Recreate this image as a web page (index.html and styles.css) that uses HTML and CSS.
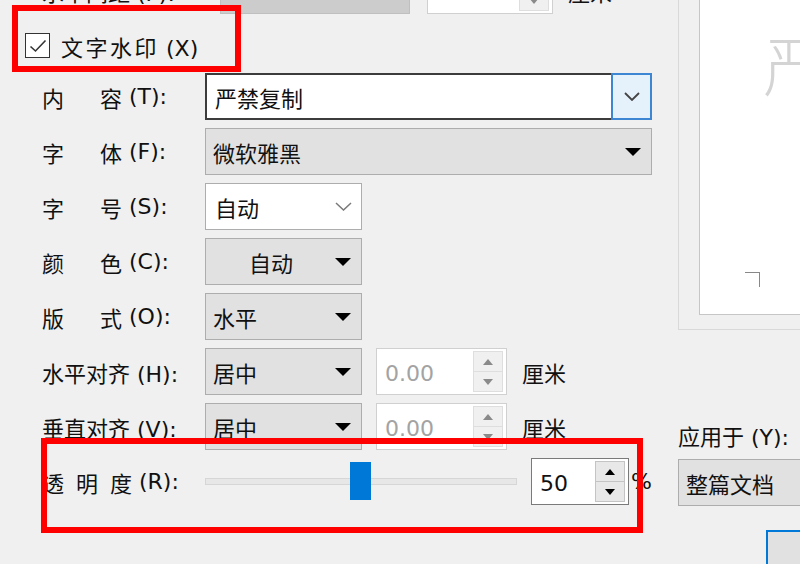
FILE: index.html
```html
<!DOCTYPE html>
<html lang="zh-CN">
<head>
    <meta charset="UTF-8">
    <title>水印</title>
    <link rel="stylesheet" href="styles.css">
</head>
<body>
    <div class="dialog">
        <div class="form">
            <div class="row row-cut">
                <span class="label">水平间距 (P):</span>
                <span class="field-off"></span>
                <div class="spin spin-cut">
                    <span class="spin-value">0.00</span>
                    <span class="spin-btns"><i class="up"></i><i class="down"></i></span>
                </div>
                <span class="unit">厘米</span>
            </div>

            <label class="check-row">
                <span class="checkbox">
                    <svg width="18" height="14" viewBox="0 0 18 14"><path d="M1.5 7.5 L6.5 12 L16.5 1.5" fill="none" stroke="#333" stroke-width="1.6"/></svg>
                </span>
                <span class="check-text"><span class="check-cjk">文字水印</span> (X)</span>
            </label>

            <div class="row">
                <span class="label"><span class="spread"><b>内</b><b>容</b></span> (T):</span>
                <div class="combo wide">
                    <span class="combo-text">严禁复制</span>
                    <span class="combo-btn">
                        <svg width="16" height="9" viewBox="0 0 16 9"><path d="M1 1 L8 8 L15 1" fill="none" stroke="#444" stroke-width="1.8"/></svg>
                    </span>
                </div>
            </div>

            <div class="row">
                <span class="label"><span class="spread"><b>字</b><b>体</b></span> (F):</span>
                <div class="select wide">
                    <span class="select-text">微软雅黑</span>
                    <svg class="tri" width="16" height="8" viewBox="0 0 16 8"><path d="M0 0 H16 L8 8 Z" fill="#000"/></svg>
                </div>
            </div>

            <div class="row">
                <span class="label"><span class="spread"><b>字</b><b>号</b></span> (S):</span>
                <div class="edit-select small">
                    <span class="select-text">自动</span>
                    <svg width="17" height="9" viewBox="0 0 17 9"><path d="M1 1 L8.5 8 L16 1" fill="none" stroke="#7a7a7a" stroke-width="1.5"/></svg>
                </div>
            </div>

            <div class="row">
                <span class="label"><span class="spread"><b>颜</b><b>色</b></span> (C):</span>
                <div class="select small">
                    <span class="select-text center">自动</span>
                    <svg class="tri" width="16" height="8" viewBox="0 0 16 8"><path d="M0 0 H16 L8 8 Z" fill="#000"/></svg>
                </div>
            </div>

            <div class="row">
                <span class="label"><span class="spread"><b>版</b><b>式</b></span> (O):</span>
                <div class="select small">
                    <span class="select-text">水平</span>
                    <svg class="tri" width="16" height="8" viewBox="0 0 16 8"><path d="M0 0 H16 L8 8 Z" fill="#000"/></svg>
                </div>
            </div>

            <div class="row">
                <span class="label">水平对齐 (H):</span>
                <div class="select small">
                    <span class="select-text">居中</span>
                    <svg class="tri" width="16" height="8" viewBox="0 0 16 8"><path d="M0 0 H16 L8 8 Z" fill="#000"/></svg>
                </div>
                <div class="spin">
                    <span class="spin-value">0.00</span>
                    <span class="spin-btns"><i class="up"></i><i class="down"></i></span>
                </div>
                <span class="unit">厘米</span>
            </div>

            <div class="row">
                <span class="label">垂直对齐 (V):</span>
                <div class="select small">
                    <span class="select-text">居中</span>
                    <svg class="tri" width="16" height="8" viewBox="0 0 16 8"><path d="M0 0 H16 L8 8 Z" fill="#000"/></svg>
                </div>
                <div class="spin">
                    <span class="spin-value">0.00</span>
                    <span class="spin-btns"><i class="up"></i><i class="down"></i></span>
                </div>
                <span class="unit">厘米</span>
            </div>

            <div class="row">
                <span class="label"><span class="spread spread3"><b>透</b><b>明</b><b>度</b></span> (R):</span>
                <div class="slider">
                    <div class="track"></div>
                    <div class="thumb"></div>
                </div>
                <div class="spin spin-pct">
                    <span class="spin-value">50</span>
                    <span class="spin-btns"><i class="up"></i><i class="down"></i></span>
                </div>
                <span class="pct">%</span>
            </div>
        </div>

        <div class="side">
            <div class="preview">
                <div class="page">
                    <span class="wm">严</span>
                    <span class="crop"></span>
                </div>
            </div>
            <div class="apply-label">应用于 (Y):</div>
            <div class="select apply">
                <span class="select-text">整篇文档</span>
            </div>
            <div class="ok-btn"></div>
        </div>
    </div>

    <div class="mark mark-check"></div>
    <div class="mark mark-alpha"></div>
</body>
</html>
```

FILE: styles.css
```css
body {
    margin: 0;
    width: 800px;
    height: 564px;
    overflow: hidden;
    background: #f0f0f0;
    font-family: "DejaVu Sans", "Noto Sans CJK SC", "Microsoft YaHei", sans-serif;
    font-size: 22px;
    color: #111;
    position: relative;
}

.dialog {
    display: grid;
    grid-template-columns: 678px 1fr;
    margin-top: -33px;
}

.form {
    padding-left: 42px;
}

.row {
    display: flex;
    align-items: center;
    height: 47px;
    margin-bottom: 8px;
}

.label {
    width: 163px;
    flex-shrink: 0;
    white-space: nowrap;
    display: flex;
    align-items: center;
}

.spread {
    display: inline-flex;
    justify-content: space-between;
    width: 80px;
    margin-right: 7px;
}

.spread b {
    font-weight: normal;
}

.spread3 {
    width: 90px;
}

/* first row, mostly scrolled off */
.row-cut .field-off {
    width: 190px;
    height: 47px;
    margin-left: 15px;
    background: #cccccc;
    border: 1px solid #bfbfbf;
    box-sizing: border-box;
}

.spin-cut {
    margin-left: 17px !important;
    width: 126px !important;
}

.check-row {
    display: flex;
    align-items: center;
    height: 47px;
    margin: 8px 0 4px -17px;
}

.checkbox {
    width: 25px;
    height: 25px;
    border: 1.5px solid #333;
    box-sizing: border-box;
    display: flex;
    align-items: center;
    justify-content: center;
    margin-right: 11px;
    background: #fff;
}

.check-text {
    white-space: nowrap;
}

.check-cjk {
    letter-spacing: 2.5px;
}

.wide {
    width: 447px;
}

.small {
    width: 157px;
}

.combo {
    display: flex;
    height: 47px;
    box-sizing: border-box;
    background: #fff;
    border: 2px solid #3c3c3c;
    border-right: none;
}

.combo-text {
    flex: 1;
    padding-left: 8px;
    display: flex;
    align-items: center;
}

.combo-btn {
    width: 37px;
    margin: -2px 0;
    background: #e5f1fb;
    border: 2px solid #3d86d4;
    display: flex;
    align-items: center;
    justify-content: center;
}

.select {
    display: flex;
    align-items: center;
    height: 47px;
    box-sizing: border-box;
    background: #e1e1e1;
    border: 1px solid #adadad;
    padding: 0 10px 0 7px;
}

.select-text {
    flex: 1;
}

.select-text.center {
    text-align: center;
    padding-right: 6px;
}

.edit-select {
    display: flex;
    align-items: center;
    height: 47px;
    box-sizing: border-box;
    background: #fff;
    border: 1px solid #adadad;
    padding: 0 9px 0 9px;
}

.spin {
    display: flex;
    align-items: center;
    width: 131px;
    height: 47px;
    margin-left: 14px;
    box-sizing: border-box;
    background: #fff;
    border: 1px solid #d0d0d0;
}

.spin-value {
    flex: 1;
    padding: 4px 0 0 8px;
    color: #a3a3a3;
}

.spin-btns {
    width: 28px;
    height: 39px;
    margin-right: 3px;
    display: flex;
    flex-direction: column;
    border: 1px solid #dedede;
    background: #f0f0f0;
}

.spin-btns i {
    flex: 1;
    display: flex;
    align-items: center;
    justify-content: center;
}

.spin-btns i + i {
    border-top: 1px solid #dedede;
}

.spin-btns i::before {
    content: "";
    border-left: 5px solid transparent;
    border-right: 5px solid transparent;
}

.spin-btns .up::before {
    border-bottom: 6px solid #8a8a8a;
}

.spin-btns .down::before {
    border-top: 6px solid #8a8a8a;
}

.unit {
    margin-left: 15px;
}

.slider {
    position: relative;
    width: 312px;
    height: 47px;
    display: flex;
    align-items: center;
}

.track {
    flex: 1;
    height: 7px;
    box-sizing: border-box;
    background: #e7e7e7;
    border: 1px solid #d6d6d6;
}

.thumb {
    position: absolute;
    left: 145px;
    top: 4px;
    width: 21px;
    height: 38px;
    background: #0078d7;
}

.spin-pct {
    width: 98px;
    border-color: #7a7a7a;
}

.spin-pct .spin-value {
    color: #111;
}

.spin-pct .spin-btns {
    border-color: #c4c4c4;
    background: #e8e8e8;
}

.spin-pct .spin-btns i + i {
    border-top-color: #c4c4c4;
}

.spin-pct .up::before {
    border-bottom-color: #000;
}

.spin-pct .down::before {
    border-top-color: #000;
}

.pct {
    margin-left: 2px;
}

.side {
    display: flex;
    flex-direction: column;
}

.preview {
    height: 363px;
    box-sizing: border-box;
    border: 1px solid #d9d9d9;
    border-right: none;
    border-top: none;
    padding: 0 0 14px 20px;
    display: flex;
}

.page {
    flex: 1;
    background: #fff;
    border-left: 1px solid #c6c6c6;
    border-bottom: 1px solid #c6c6c6;
    display: flex;
    flex-direction: column;
}

.wm {
    margin: 62px 0 0 63px;
    font-family: "Noto Sans CJK SC", sans-serif;
    font-size: 66px;
    font-weight: 300;
    line-height: 1;
    color: #d4d4d4;
    white-space: nowrap;
}

.crop {
    margin: auto 0 27px 45px;
    width: 14px;
    height: 14px;
    border-top: 1px solid #888;
    border-right: 1px solid #888;
}

.apply-label {
    margin-top: 93px;
    line-height: 30px;
    white-space: nowrap;
}

.select.apply {
    margin-top: 6px;
    border-right: none;
    white-space: nowrap;
}

.ok-btn {
    margin: 24px 0 0 88px;
    height: 50px;
    border: 2px solid #0078d7;
    border-right: none;
    background: #e1e1e1;
}

.mark {
    position: absolute;
    border: 6px solid #ff0000;
}

.mark-check {
    left: 12px;
    top: 5px;
    width: 217px;
    height: 55px;
}

.mark-alpha {
    left: 41px;
    top: 438px;
    width: 590px;
    height: 83px;
}
```
